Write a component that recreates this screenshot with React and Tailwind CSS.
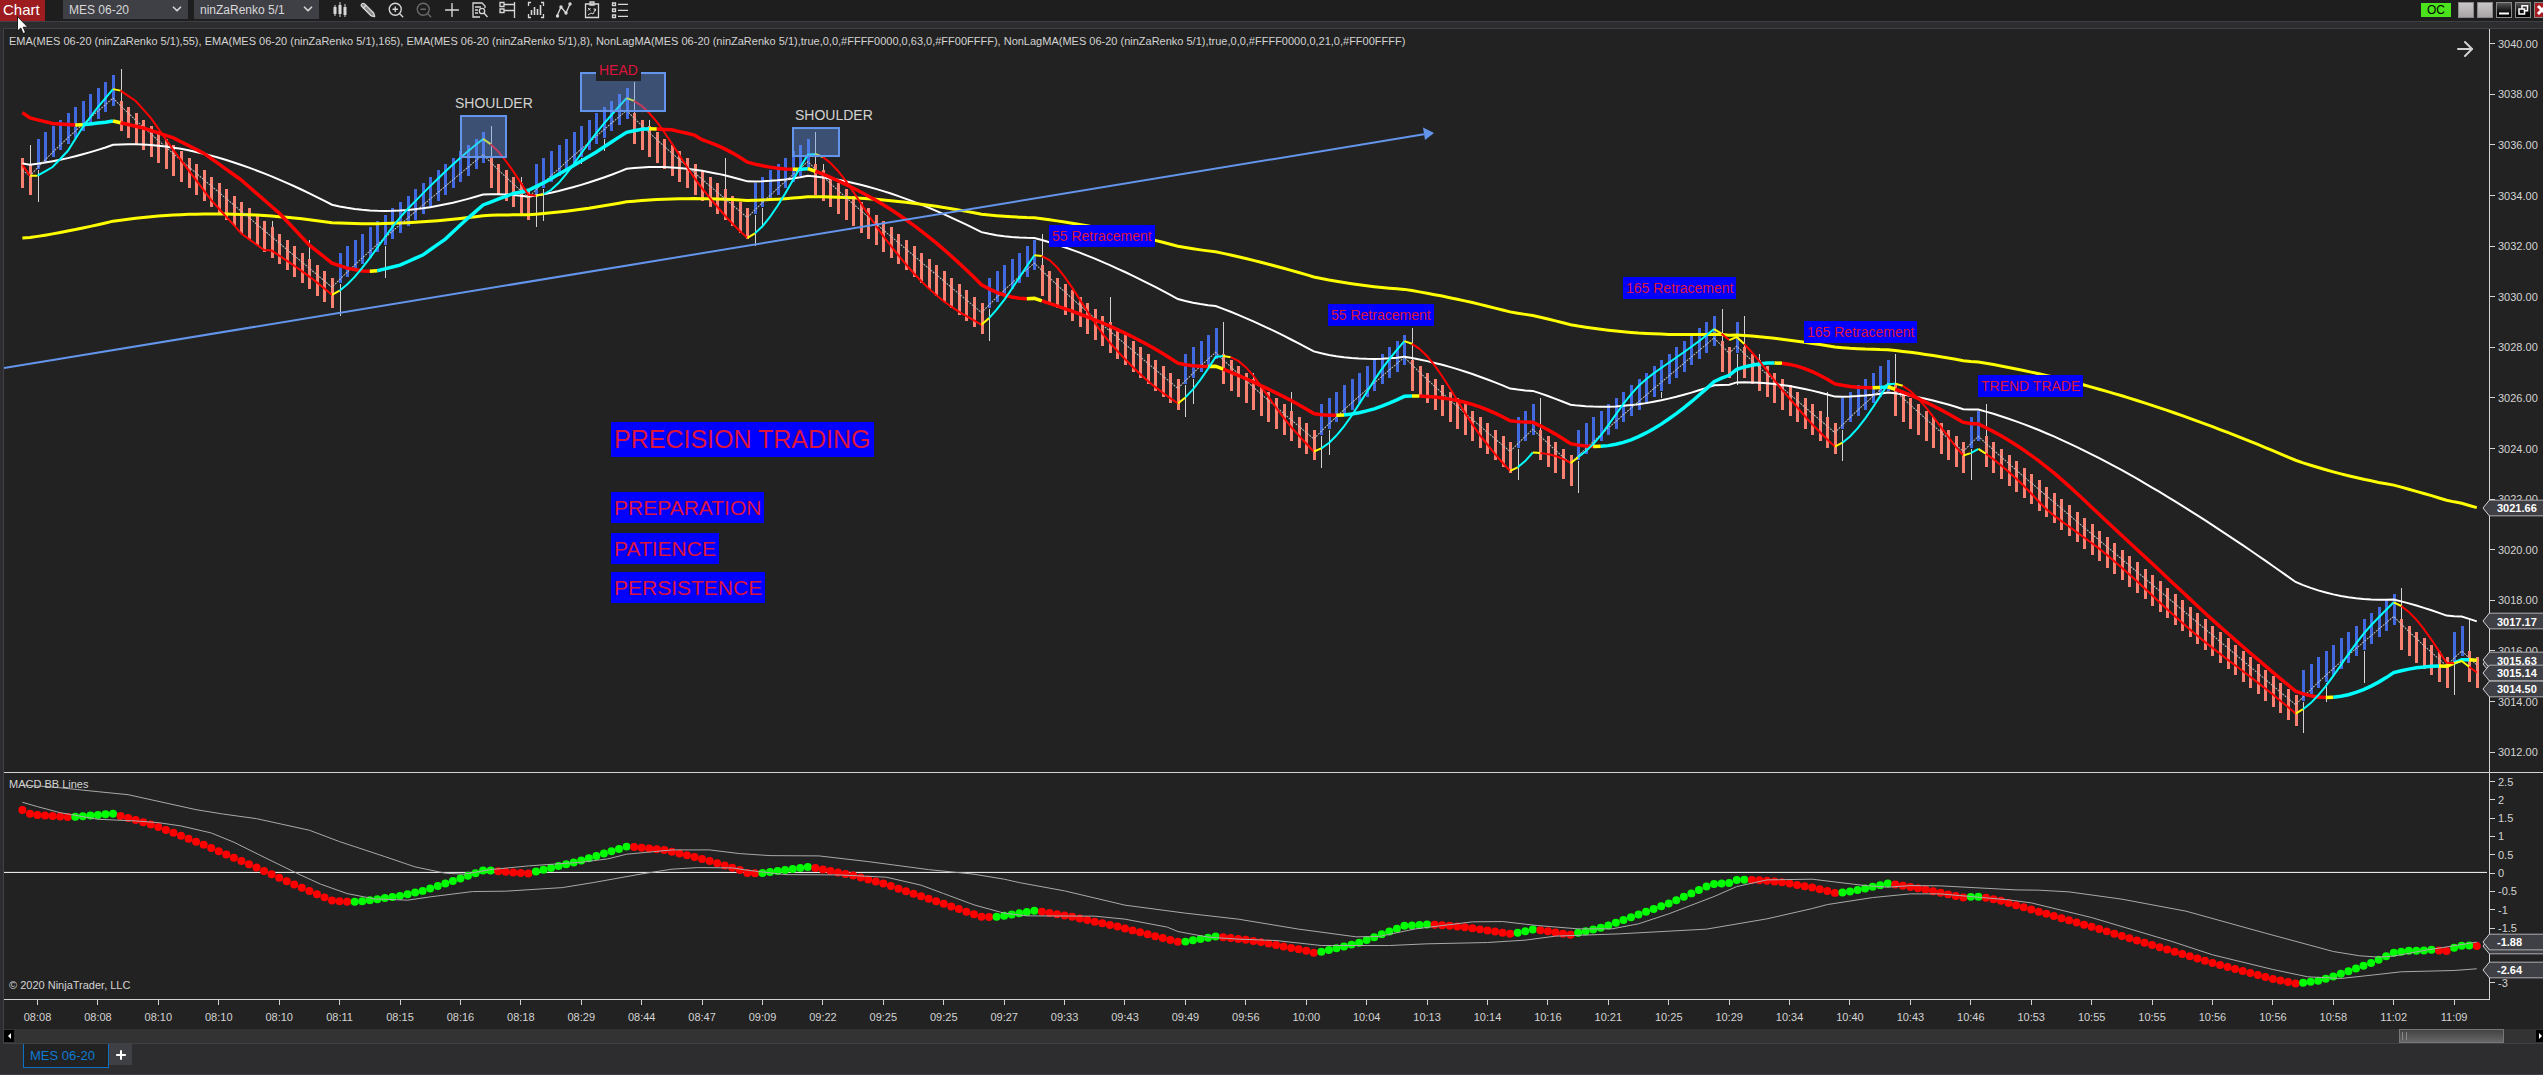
import React from "react";
import { Pencil, ZoomIn, ZoomOut, Plus, ChevronDown, ArrowRight } from "lucide-react";

const CHART_W = 2485;
const PRICE_H = 743;
const MACD_H = 226;
const BAR_GAP = 7.552;
const TICK = 0.25;

const barX = (i) => 18.4 + i * BAR_GAP;
const priceY = (p) => 14.8 + (3040 - p) * 25.29;
const macdY = (v) => 99.5 - v * 36.5;
const pct = (value, total) => `${(value / total) * 100}%`;

// Bars per swing, alternating down / up, starting with a down swing
const SWINGS = [2, 11, 29, 20, 6, 13, 16, 8, 23, 7, 19, 5, 13, 12, 14, 3, 5, 19, 2, 1, 13, 7, 10, 2, 42, 13, 7, 2, 2];

// Extra wicks in ticks; positive goes above the body, negative below
const WICKS = {
  1: 3, 33: 1, 38: 3, 48: -5, 66: 1, 69: -5, 74: -1, 77: -2, 83: 1, 93: 5, 98: -3, 106: 1, 144: 4,
  155: -4, 163: 1, 168: 3, 173: -4, 217: -1, 230: 1, 239: 4, 305: -3, 310: -5,
};

const buildBars = () => {
  const bars = [];
  let top = 3035.5;
  SWINGS.forEach((count, s) => {
    const up = s % 2 === 1;
    for (let n = 0; n < count; n++) {
      const i = bars.length;
      const reversal = n === 0 && i > 0;
      if (i > 0) {
        const step = reversal ? 4 : 1;
        top += (up ? step : -step) * TICK;
      }
      const bottom = top - 5 * TICK;
      let wick = WICKS[i] || 0;
      if (reversal) wick = up ? -5 : 5;
      bars.push({
        i,
        up,
        top,
        bottom,
        close: up ? top : bottom,
        high: wick > 0 ? top + wick * TICK : top,
        low: wick < 0 ? bottom + wick * TICK : bottom,
      });
    }
  });
  return bars;
};

const interpolate = (points, i) => {
  for (let k = 1; k < points.length; k++) {
    const [x1, y1] = points[k];
    if (i <= x1) {
      const [x0, y0] = points[k - 1];
      return y0 + ((y1 - y0) * (i - x0)) / (x1 - x0);
    }
  }
  return points[points.length - 1][1];
};

const ema = (closes, period, seed) => {
  const k = 2 / (period + 1);
  const out = [seed];
  for (let i = 1; i < closes.length; i++) out.push(out[i - 1] + k * (closes[i] - out[i - 1]));
  return out;
};

// Non-lag moving average; the first bars come from the warm-up table
const nonLagMA = (closes, length, warm) => {
  const cycle = 4;
  const phase = length - 1;
  const len = length * cycle + phase;
  const weights = [];
  for (let i = 0; i < len; i++) {
    const t =
      i <= phase - 1 ? i / (phase - 1) : 1 + ((i - phase + 1) * (2 * cycle - 1)) / (cycle * length - 1);
    const g = t <= 0.5 ? 1 : 1 / (3 * Math.PI * t + 1);
    weights.push(g * Math.cos(Math.PI * t));
  }
  const total = weights.reduce((a, b) => a + b, 0);
  const last = warm[warm.length - 1][0];
  return closes.map((_, i) => {
    if (i <= last) return interpolate(warm, i);
    let sum = 0;
    weights.forEach((w, k) => {
      sum += w * closes[Math.max(i - k, 0)];
    });
    return sum / total;
  });
};

const WARM_63 = [
  [0, 3037.28], [1, 3037.07], [4, 3036.85], [7, 3036.79], [8, 3036.8], [11, 3036.9], [12, 3036.95], [13, 3036.88],
  [16, 3036.67], [20, 3036.28], [24, 3035.68], [29, 3034.61], [34, 3033.31], [38, 3032.04], [41, 3031.33],
  [43, 3031.13], [45, 3031.02], [46, 3031.01], [47, 3031.03], [50, 3031.25], [53, 3031.65], [56, 3032.28],
  [59, 3033.11], [61, 3033.63], [63, 3033.86], [65, 3034.08], [67, 3034.21], [69, 3034.5], [72, 3035.01],
  [76, 3035.72], [78, 3036.12], [80, 3036.5], [82, 3036.62], [83, 3036.64], [84, 3036.63], [86, 3036.6],
  [89, 3036.39],
];

const WARM_21 = [
  [0, 3035.21], [1, 3034.78], [2, 3034.79], [4, 3035.13], [6, 3035.76], [8, 3036.71], [10, 3037.5], [12, 3038.21],
  [13, 3038.15], [15, 3037.74], [17, 3037.07], [20, 3035.8], [25, 3033.82], [29, 3032.5], [32, 3031.85],
];

const MACD = [
  [0, 37], [1, 40.7], [2, 42], [6, 44], [7, 43.8], [12, 40.7], [13, 43], [15, 47], [18, 54], [24, 71.7], [32, 98],
  [36, 111.7], [41, 127.7], [43, 129], [44, 128.9], [45, 128.5], [50, 123], [53, 118], [56, 110.7], [61, 97.7],
  [62, 97.6], [63, 98.3], [67, 100.7], [68, 98.7], [74, 87.7], [80, 73.7], [81, 74], [85, 77], [90, 86], [95, 97],
  [96, 100], [97, 100.3], [98, 100], [104, 94], [105, 95], [110, 102.7], [114, 110.7], [122, 131], [127, 144],
  [128, 144.2], [129, 144], [134, 138], [135, 139], [139, 144], [145, 153.7], [150, 163.3], [153, 169], [154, 168.8],
  [158, 163.7], [159, 164.3], [162, 167], [164, 169.3], [170, 178], [171, 180], [172, 179], [177, 170], [183, 153],
  [186, 151.7], [188, 152.3], [191, 154.3], [197, 161], [198, 160], [200, 156.7], [201, 157.3], [205, 162],
  [206, 160], [209, 155], [210, 152.7], [218, 130.7], [223, 113.7], [224, 111], [226, 110], [227, 107], [228, 106.8],
  [230, 107.3], [233, 109.3], [237, 114.7], [240, 120], [241, 119.7], [242, 118.7], [247, 110.7], [248, 111.7],
  [252, 116.7], [257, 124.7], [258, 124], [259, 123.8], [260, 125], [262, 128], [274, 154], [290, 190.3],
  [298, 206.3], [301, 210.7], [302, 210], [304, 208], [306, 203.7], [311, 190.3], [314, 180], [316, 178],
  [318, 177.8], [319, 177], [321, 178.3], [322, 175], [323, 173], [324, 172.8], [325, 173.3],
];

const BAND_UPPER = [
  [0, 12], [4, 14], [10, 18.7], [14, 21.7], [23, 36.7], [26.5, 41], [31, 45.7], [38, 57.3], [42, 68.7], [48, 83.7],
  [52, 94], [56, 100.3], [58.5, 101.3], [62, 96.7], [67, 93], [74, 89.3], [77.5, 86], [80, 81.3], [86, 77],
  [91, 77], [95, 80.7], [99, 82.7], [105.5, 83], [112, 88.7], [120, 96.7], [126, 101.3], [130, 106.3], [132, 109.7],
  [138, 118], [146, 132.3], [154, 140.3], [161, 146.3], [169, 156.3], [176.6, 164], [179.6, 163.7], [184.5, 156],
  [192, 149], [196, 148.7], [200.6, 152.7], [206, 156], [210.5, 156], [214, 151], [218, 141], [224, 123.7],
  [227, 113.7], [231, 107], [237, 106.3], [244, 112.7], [247, 114.3], [250, 112.7], [254, 113], [264, 117],
  [267, 117.3], [271, 119], [278, 126.3], [286.5, 138.3], [297, 160.3], [306, 178.7], [309.5, 183], [312, 184.3],
  [314, 183.3], [318, 177.7], [325, 169.3],
];

const BAND_LOWER = [
  [0, 29.3], [2, 33.7], [5, 39.7], [10, 46.3], [15, 48], [18, 49.7], [21, 53], [25, 60], [28, 69.3], [32, 84.3],
  [36.6, 101.3], [39.5, 111.3], [43, 120.7], [46.6, 126], [51, 127.3], [54, 124], [59.6, 118.7], [64, 118.3],
  [71.5, 114.7], [75.6, 109.7], [82, 101], [86, 96.3], [89.4, 94.7], [94, 95], [96, 97.3], [101, 101.7], [108, 102],
  [114.4, 104.3], [119, 112.3], [122, 120.7], [126, 132], [130, 140.3], [133, 143], [142, 143.3], [146, 146.3],
  [151.6, 154.3], [153, 158.7], [157, 164.3], [161, 166.3], [166, 167.7], [172, 172.7], [181, 172.7], [186, 171],
  [194, 169.7], [199, 167.3], [203, 163.3], [211.5, 161], [223, 156.3], [231, 146], [237, 135.7], [239, 131.7],
  [245, 124.7], [250, 121], [254, 121], [263, 127], [266, 130], [274, 144.7], [284.5, 168.3], [290, 182],
  [298, 196.7], [302.6, 204], [307, 205.7], [311.5, 202], [315, 199], [322, 197.7], [325, 196],
];

const TIMES = [
  "08:08", "08:08", "08:10", "08:10", "08:10", "08:11", "08:15", "08:16", "08:18", "08:29", "08:44", "08:47", "09:09",
  "09:22", "09:25", "09:25", "09:27", "09:33", "09:43", "09:49", "09:56", "10:00", "10:04", "10:13", "10:14", "10:16",
  "10:21", "10:25", "10:29", "10:34", "10:40", "10:43", "10:46", "10:53", "10:55", "10:55", "10:56", "10:56", "10:58",
  "11:02", "11:09",
];

const PRICES = [3040, 3038, 3036, 3034, 3032, 3030, 3028, 3026, 3024, 3022, 3020, 3018, 3016, 3014, 3012];
const MACD_LEVELS = [2.5, 2, 1.5, 1, 0.5, 0, -0.5, -1, -1.5, -3];

const BOXES = [
  { x: 457, y: 87, w: 45, h: 41 },
  { x: 577, y: 44, w: 84, h: 38 },
  { x: 789, y: 99, w: 46, h: 28 },
];

const PLAIN = "text-sm/4 p-[3px] text-[#d3d3d3]";
const SMALL = "text-sm/4 p-[3px] bg-[#0000ff] text-[#dc143c]";
const MEDIUM = "text-[21px]/[25px] p-[3px] bg-[#0000ff] text-[#dc143c]";
const LARGE = "text-[25px]/[29px] p-[3px] bg-[#0000ff] text-[#dc143c]";

const NOTES = [
  { text: "SHOULDER", x: 448, y: 63, style: PLAIN },
  { text: "HEAD", x: 592, y: 30, style: "text-sm/4 p-[3px] bg-[#222222] text-[#dc143c]" },
  { text: "SHOULDER", x: 788, y: 75, style: PLAIN },
  { text: "55 Retracement", x: 1045, y: 196, style: SMALL },
  { text: "55 Retracement", x: 1324, y: 275, style: SMALL },
  { text: "165 Retracement", x: 1619, y: 248, style: SMALL },
  { text: "165 Retracement", x: 1800, y: 292, style: SMALL },
  { text: "TREND TRADE", x: 1974, y: 346, style: SMALL },
  { text: "PRECISION TRADING", x: 607, y: 393, style: LARGE },
  { text: "PREPARATION", x: 607, y: 463, style: MEDIUM },
  { text: "PATIENCE", x: 607, y: 504, style: MEDIUM },
  { text: "PERSISTENCE", x: 607, y: 543, style: MEDIUM },
];

const bars = buildBars();
const closes = bars.map((b) => b.close);
const ema55 = ema(closes, 55, 3035.27);
const ema165 = ema(closes, 165, 3032.32);
const ema8 = ema(closes, 8, 3035);
const slow = nonLagMA(closes, 63, WARM_63);
const fast = nonLagMA(closes, 21, WARM_21);

const toPoints = (values) => values.map((v, i) => `${barX(i).toFixed(1)},${priceY(v).toFixed(1)}`).join(" ");
const bandPoints = (points) => points.map(([i, y]) => `${barX(i).toFixed(1)},${y}`).join(" ");

// Splits a line into runs: cyan rising, red falling, yellow where it turns
const TrendLine = ({ values, width }) => {
  const runs = [];
  let prev = 0;
  for (let i = 1; i < values.length; i++) {
    const dir = values[i] >= values[i - 1] ? 1 : -1;
    const color = prev !== 0 && dir !== prev ? "#ffff00" : dir > 0 ? "#00ffff" : "#ff0000";
    const point = `${barX(i).toFixed(1)},${priceY(values[i]).toFixed(1)}`;
    const run = runs[runs.length - 1];
    if (run && run.color === color) run.points.push(point);
    else runs.push({ color, points: [`${barX(i - 1).toFixed(1)},${priceY(values[i - 1]).toFixed(1)}`, point] });
    prev = dir;
  }
  return runs.map((run, k) => (
    <polyline key={k} points={run.points.join(" ")} fill="none" stroke={run.color} strokeWidth={width} />
  ));
};

const PriceChart = () => (
  <svg
    viewBox={`0 0 ${CHART_W} ${PRICE_H}`}
    preserveAspectRatio="none"
    className="absolute inset-0 h-full w-full"
    role="img"
    aria-label="MES 06-20 price chart"
  >
    <g shapeRendering="crispEdges">
      {bars.map((b) => (
        <g key={b.i}>
          {b.high > b.top && (
            <rect x={Math.round(barX(b.i))} y={priceY(b.high)} width="1" height={priceY(b.top) - priceY(b.high)} fill="#d3d3d3" />
          )}
          {b.low < b.bottom && (
            <rect x={Math.round(barX(b.i))} y={priceY(b.bottom)} width="1" height={priceY(b.low) - priceY(b.bottom)} fill="#d3d3d3" />
          )}
          <rect
            x={Math.round(barX(b.i)) - 1}
            y={priceY(b.top)}
            width="3"
            height={priceY(b.bottom) - priceY(b.top) - 1}
            fill={b.up ? "#4169e1" : "#fa8072"}
          />
        </g>
      ))}
    </g>
    <polyline points={toPoints(ema55)} fill="none" stroke="#ffffff" strokeWidth="2" />
    <polyline points={toPoints(ema165)} fill="none" stroke="#ffff00" strokeWidth="3" />
    <polyline points={toPoints(ema8)} fill="none" stroke="#c0c0c0" strokeWidth="1" strokeDasharray="2 1" />
    <TrendLine values={slow} width={3.5} />
    <TrendLine values={fast} width={2} />
    {BOXES.map((r) => (
      <rect
        key={r.x}
        x={r.x}
        y={r.y}
        width={r.w}
        height={r.h}
        fill="#6495ed"
        fillOpacity="0.4"
        stroke="#6495ed"
        strokeWidth="2"
      />
    ))}
    <line x1="0" y1="339" x2="1420" y2="105.3" stroke="#6495ed" strokeWidth="2" />
    <path d="M1430 104 L1419 98.5 L1421 111 Z" fill="#6495ed" />
  </svg>
);

const MacdChart = () => {
  const values = bars.map((b) => interpolate(MACD, b.i));
  return (
    <svg
      viewBox={`0 0 ${CHART_W} ${MACD_H}`}
      preserveAspectRatio="none"
      className="absolute inset-0 h-full w-full"
      role="img"
      aria-label="MACD BB Lines"
    >
      <line x1="0" y1="99.5" x2="2483" y2="99.5" stroke="#ffffff" strokeWidth="1" />
      {values.map((y, i) => (
        <circle
          key={i}
          cx={barX(i)}
          cy={y}
          r="4"
          fill={i > 0 && y < values[i - 1] ? "#00ff00" : "#ff0000"}
        />
      ))}
      <polyline points={bandPoints(BAND_UPPER)} fill="none" stroke="#a9a9a9" strokeWidth="1" />
      <polyline points={bandPoints(BAND_LOWER)} fill="none" stroke="#a9a9a9" strokeWidth="1" />
    </svg>
  );
};

const AxisLabel = ({ top, children }) => (
  <div className="absolute left-0 flex h-4 -translate-y-1/2 items-center gap-[3px]" style={{ top }}>
    <span className="h-px w-[5px] bg-[#d3d3d3]" />
    {children}
  </div>
);

const AxisTag = ({ top, children }) => (
  <div
    className="absolute right-0 flex h-[17px] w-[61px] -translate-y-1/2 items-center pl-[15px] font-bold text-white"
    style={{ top }}
  >
    <svg viewBox="0 0 61 17" className="absolute inset-0 h-full w-full" aria-hidden="true">
      <path d="M62 0.5 H7.5 L1 8.5 L7.5 16.5 H62" fill="#3f3f46" stroke="#d3d3d3" />
    </svg>
    <span className="relative">{children}</span>
  </div>
);

const IconButton = ({ label, children }) => (
  <button type="button" aria-label={label} className="flex h-5 w-7 items-center justify-center text-[#d8d8d8]">
    {children}
  </button>
);

const Glyph = ({ children }) => (
  <svg viewBox="0 0 18 18" width="18" height="18" fill="none" stroke="currentColor" strokeWidth="1.3">
    {children}
  </svg>
);

const ToolbarSelect = ({ label, value }) => (
  <label className="relative h-[19px] w-[125px] bg-[#3f3f46]">
    <select aria-label={label} defaultValue={value} className="h-full w-full appearance-none pl-1.5 text-xs text-[#d8d8d8]">
      <option>{value}</option>
    </select>
    <ChevronDown className="pointer-events-none absolute top-0.5 right-1 h-3.5 w-3.5" strokeWidth={3} />
  </label>
);

const Toolbar = () => (
  <header className="relative flex h-[22px] shrink-0 items-start overflow-hidden border-b border-[#3f3f46] bg-[#1e1e1e]">
    <h1 className="h-[21px] w-[45px] shrink-0 bg-[#9c1c20] pl-[3px] text-[15px]/[19px] text-white">Chart</h1>
    <div className="ml-[18px] flex shrink-0 gap-1.5">
      <ToolbarSelect label="Instrument" value="MES 06-20" />
      <ToolbarSelect label="Data series" value="ninZaRenko 5/1" />
    </div>
    <div className="ml-[7px] flex shrink-0">
      <IconButton label="Chart style">
        <Glyph>
          <path d="M4 4v11M9 1v15M14 3v13" strokeWidth="1" />
          <path d="M4 6v7M9 4v9M14 6v8" strokeWidth="3" />
        </Glyph>
      </IconButton>
      <IconButton label="Drawing tools">
        <Pencil className="h-4 w-4 -scale-x-100" strokeWidth={2} fill="#8a8a8a" />
      </IconButton>
      <IconButton label="Zoom in">
        <ZoomIn className="h-[18px] w-[18px]" strokeWidth={1.8} />
      </IconButton>
      <IconButton label="Zoom out">
        <ZoomOut className="h-[18px] w-[18px] text-[#6a6a6a]" strokeWidth={1.8} />
      </IconButton>
      <IconButton label="Crosshair">
        <Plus className="h-[22px] w-[22px]" strokeWidth={1.5} />
      </IconButton>
      <IconButton label="Data box">
        <Glyph>
          <path d="M14 7V5l-3-3H2v14h7M4 6h6M4 9h3M4 12h3" />
          <circle cx="11" cy="10" r="2.7" />
          <path d="M13 12l3.5 4" />
        </Glyph>
      </IconButton>
      <IconButton label="Chart trader">
        <Glyph>
          <path d="M1 1.5h4v4H1zM5 3.5h11M1 8h4v3.5H1zM5 9.5h11M15.5 1v16" />
        </Glyph>
      </IconButton>
      <IconButton label="Data series">
        <Glyph>
          <path d="M4 1.5H1.5V5M14 1.5h2.5V5M1.5 13v3.5H4M16.5 13v3.5H14" />
          <path d="M4.500 9v5M7.500 6v8M10.500 8v6M13.500 4v10" strokeWidth="1.6" />
        </Glyph>
      </IconButton>
      <IconButton label="Indicators">
        <Glyph>
          <path d="M2 15L6 6l5 6 4-9" />
          <g fill="currentColor" stroke="none">
            <circle cx="2.5" cy="15" r="1.7" />
            <circle cx="6" cy="6" r="1.7" />
            <circle cx="11" cy="12" r="1.7" />
            <circle cx="15" cy="3" r="1.7" />
          </g>
        </Glyph>
      </IconButton>
      <IconButton label="Strategies">
        <Glyph>
          <path d="M2.500 3h13v13.500h-13zM7 1h4v3H7z" />
          <path d="M5 7l2.500 2.500M7.500 7L5 9.500M5 14l3-2 2 1 2.500-5M10.500 8h2v2" strokeWidth="1" />
        </Glyph>
      </IconButton>
      <IconButton label="Properties">
        <Glyph>
          <path d="M1.500 2h3v2.500h-3zM1.500 8h3v2.500h-3zM1.500 14h3v2.500h-3zM7 3.300h10M7 9.300h10M7 15.300h10" />
        </Glyph>
      </IconButton>
    </div>
    <div className="absolute top-0.5 -right-[7px] flex items-start gap-[3px]">
      <span className="mt-px mr-1 h-3.5 w-[30px] bg-[#4be31b] text-center text-xs/[14px] text-black">OC</span>
      <button type="button" aria-label="Link instrument" className="h-4 w-4 border border-[#8b878a] bg-linear-to-b from-[#c9c6c8] to-[#a9a5a7]" />
      <button type="button" aria-label="Link interval" className="h-4 w-4 border border-[#8b878a] bg-linear-to-b from-[#c9c6c8] to-[#a9a5a7]" />
      <button type="button" aria-label="Minimize" className="h-4 w-4 border border-[#8a8a8a] bg-linear-to-b from-[#555555] to-black">
        <svg viewBox="0 0 14 14" className="h-3.5 w-3.5">
          <path d="M2 10.500h10" stroke="#ffffff" strokeWidth="2" />
        </svg>
      </button>
      <button type="button" aria-label="Restore" className="h-4 w-4 border border-[#8a8a8a] bg-linear-to-b from-[#555555] to-black">
        <svg viewBox="0 0 14 14" className="h-3.5 w-3.5" fill="none" stroke="#ffffff" strokeWidth="1.5">
          <path d="M3 6h5.500v5H3zM6 5.500V2.800h5.500v5H9" />
        </svg>
      </button>
      <button type="button" aria-label="Close" className="h-4 w-4 border border-[#8a8a8a] bg-[#a81c22]">
        <svg viewBox="0 0 14 14" className="h-3.5 w-3.5">
          <path d="M3 3l8 8M11 3l-8 8" stroke="#ffffff" strokeWidth="3" />
        </svg>
      </button>
    </div>
  </header>
);

const Cursor = () => (
  <svg viewBox="0 0 12 19" className="pointer-events-none absolute top-4 left-[17px] h-[19px] w-3" aria-hidden="true">
    <path d="M0.5 0.5v14.500l3.300-3 2.300 5.500 2.400-1-2.300-5.300h4.600z" fill="#ffffff" stroke="#000000" strokeWidth="0.8" />
  </svg>
);

const App = () => {
  return (
    <div className="relative flex h-screen flex-col overflow-hidden border-b border-[#3f3f46] bg-[#2d2d30] font-['Liberation_Sans',Arial,sans-serif] text-[11px]/[14px] text-[#d3d3d3]">
      <Toolbar />

      <main className="mt-1.5 ml-[3px] flex min-h-0 flex-1 flex-col border-t border-l border-[#3f3f46] bg-[#222222]">
        <section className="flex min-h-0 flex-[744_1_0%] border-b border-[#d3d3d3]">
          <div className="relative min-w-0 flex-1">
            <PriceChart />
            {NOTES.map((note) => (
              <span
                key={`${note.text}-${note.x}`}
                className={`absolute whitespace-nowrap ${note.style}`}
                style={{ left: pct(note.x, CHART_W), top: pct(note.y, PRICE_H) }}
              >
                {note.text}
              </span>
            ))}
            <p className="absolute top-[5px] left-[5px] whitespace-nowrap">
              EMA(MES 06-20 (ninZaRenko 5/1),55), EMA(MES 06-20 (ninZaRenko 5/1),165), EMA(MES 06-20 (ninZaRenko 5/1),8),
              NonLagMA(MES 06-20 (ninZaRenko 5/1),true,0,0,#FFFF0000,0,63,0,#FF00FFFF), NonLagMA(MES 06-20 (ninZaRenko
              5/1),true,0,0,#FFFF0000,0,21,0,#FF00FFFF)
            </p>
            <button type="button" aria-label="Scroll to latest" className="absolute top-2 right-3">
              <ArrowRight className="h-6 w-6" strokeWidth={2} />
            </button>
          </div>
          <div className="relative w-[54px] shrink-0 border-l border-[#d3d3d3]">
            {PRICES.map((p) => (
              <AxisLabel key={p} top={pct(priceY(p), PRICE_H)}>
                {p.toFixed(2)}
              </AxisLabel>
            ))}
            <AxisTag top={pct(priceY(3015.5), PRICE_H)} />
            {[3021.66, 3017.17, 3015.63, 3015.14, 3014.5].map((p) => (
              <AxisTag key={p} top={pct(priceY(p), PRICE_H)}>
                {p.toFixed(2)}
              </AxisTag>
            ))}
          </div>
        </section>

        <section className="flex min-h-0 flex-[227_1_0%]">
          <div className="relative min-w-0 flex-1 border-b border-[#d3d3d3]">
            <MacdChart />
            <p className="absolute top-1 left-[5px]">MACD BB Lines</p>
            <p className="absolute bottom-[7px] left-[5px]">© 2020 NinjaTrader, LLC</p>
          </div>
          <div className="relative w-[54px] shrink-0 border-l border-[#d3d3d3]">
            {MACD_LEVELS.map((v) => (
              <AxisLabel key={v} top={pct(macdY(v), MACD_H)}>
                {v}
              </AxisLabel>
            ))}
            <AxisTag top={pct(macdY(-2), MACD_H)} />
            {[-1.88, -2.64].map((v) => (
              <AxisTag key={v} top={pct(macdY(v), MACD_H)}>
                {v}
              </AxisTag>
            ))}
          </div>
        </section>

        <div className="mr-[54px] h-[29px] shrink-0">
          <div className="relative h-full">
            {TIMES.map((time, k) => (
              <div
                key={k}
                className="absolute top-0 flex w-10 -translate-x-1/2 flex-col items-center gap-[5px]"
                style={{ left: pct(barX(2 + k * 8), CHART_W) }}
              >
                <span className="h-[5px] w-px bg-[#d3d3d3]" />
                <time>{time}</time>
              </div>
            ))}
          </div>
        </div>

        <div className="flex h-[15px] shrink-0 items-center border-b border-[#3f3f46] bg-[#333333]">
          <button type="button" aria-label="Scroll left" className="h-3 w-2.5 bg-black">
            <svg viewBox="0 0 10 12" className="h-3 w-2.5">
              <path d="M7 3v6L4 6z" fill="#ffffff" />
            </svg>
          </button>
          <div className="flex h-full flex-1 justify-end pr-8">
            <div className="flex h-full w-[105px] items-center gap-[3px] border border-[#777777] bg-linear-to-b from-[#444444] to-[#666666] pl-0.5">
              <span className="h-2 w-px bg-[#888888]" />
              <span className="h-2 w-px bg-[#888888]" />
            </div>
          </div>
          <button type="button" aria-label="Scroll right" className="h-3 w-[7px] bg-black">
            <svg viewBox="0 0 7 12" className="h-3 w-[7px]">
              <path d="M3 3v6l3-3z" fill="#ffffff" />
            </svg>
          </button>
        </div>
      </main>

      <footer className="flex h-[30px] shrink-0 items-start pl-[23px]">
        <button
          type="button"
          className="h-6 w-[86px] border border-t-0 border-[#0e70c0] bg-[#222222] pl-1.5 text-left text-[13px] text-[#0e7ad0]"
        >
          MES 06-20
        </button>
        <button type="button" aria-label="New tab" className="flex h-[21px] w-[23px] items-center justify-center bg-[#3f3f46] text-white">
          <Plus className="h-3.5 w-3.5" strokeWidth={3.5} />
        </button>
      </footer>

      <Cursor />
    </div>
  );
};

export default App;
